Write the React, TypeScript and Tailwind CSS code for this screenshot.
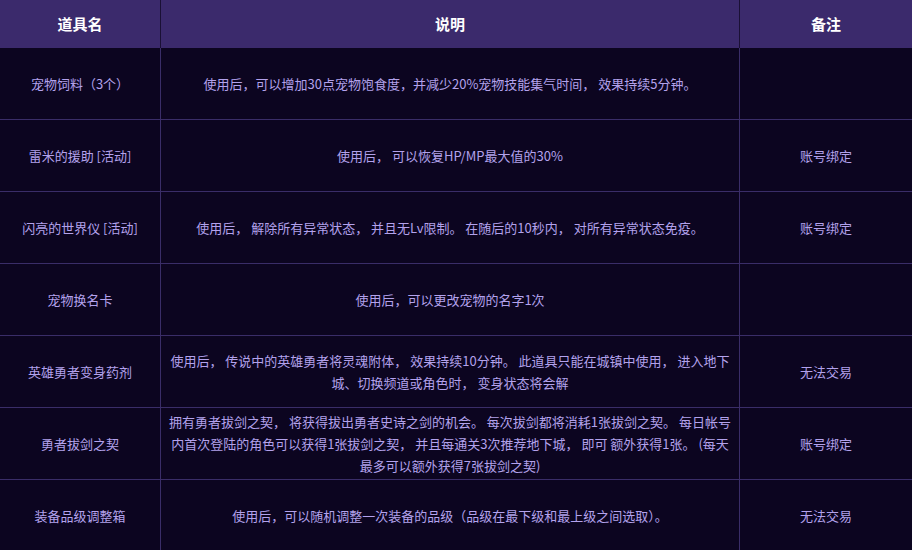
const rows: [string, string, string][] = [
  ["宠物饲料（3个）", "使用后，可以增加30点宠物饱食度，并减少20%宠物技能集气时间， 效果持续5分钟。", ""],
  ["雷米的援助 [活动]", "使用后， 可以恢复HP/MP最大值的30%", "账号绑定"],
  ["闪亮的世界仪 [活动]", "使用后， 解除所有异常状态， 并且无Lv限制。 在随后的10秒内， 对所有异常状态免疫。", "账号绑定"],
  ["宠物换名卡", "使用后，可以更改宠物的名字1次", ""],
  ["英雄勇者变身药剂", "使用后， 传说中的英雄勇者将灵魂附体， 效果持续10分钟。 此道具只能在城镇中使用， 进入地下城、切换频道或角色时， 变身状态将会解", "无法交易"],
  ["勇者拔剑之契", "拥有勇者拔剑之契， 将获得拔出勇者史诗之剑的机会。 每次拔剑都将消耗1张拔剑之契。 每日帐号内首次登陆的角色可以获得1张拔剑之契， 并且每通关3次推荐地下城， 即可 额外获得1张。 (每天最多可以额外获得7张拔剑之契)", "账号绑定"],
  ["装备品级调整箱", "使用后，可以随机调整一次装备的品级（品级在最下级和最上级之间选取）。", "无法交易"],
];
export default function App() {
  return (
    <div className="w-[912px] h-[550px] overflow-hidden bg-[#0c0520] text-[13px] text-[#b3a2ec]" style={{ fontFamily: '"Microsoft YaHei","Noto Sans CJK SC",sans-serif' }}>
      <div className="grid grid-cols-[161px_579px_172px] h-[48px] bg-[#3b2a6c] text-white font-bold text-[15px]">
        <div className="flex items-center justify-center border-r border-[#1a1035]">道具名</div>
        <div className="flex items-center justify-center border-r border-[#1a1035]">说明</div>
        <div className="flex items-center justify-center">备注</div>
      </div>
      {rows.map((r, i) => (
        <div key={i} className="grid grid-cols-[161px_579px_172px] h-[72px] border-b border-[#3a2d68] leading-[22px]">
          <div className="flex items-center justify-center text-center border-r border-[#3a2d68]">{r[0]}</div>
          <div className="flex items-center justify-center text-center border-r border-[#3a2d68] px-1">{r[1]}</div>
          <div className="flex items-center justify-center text-center">{r[2]}</div>
        </div>
      ))}
    </div>
  );
}
